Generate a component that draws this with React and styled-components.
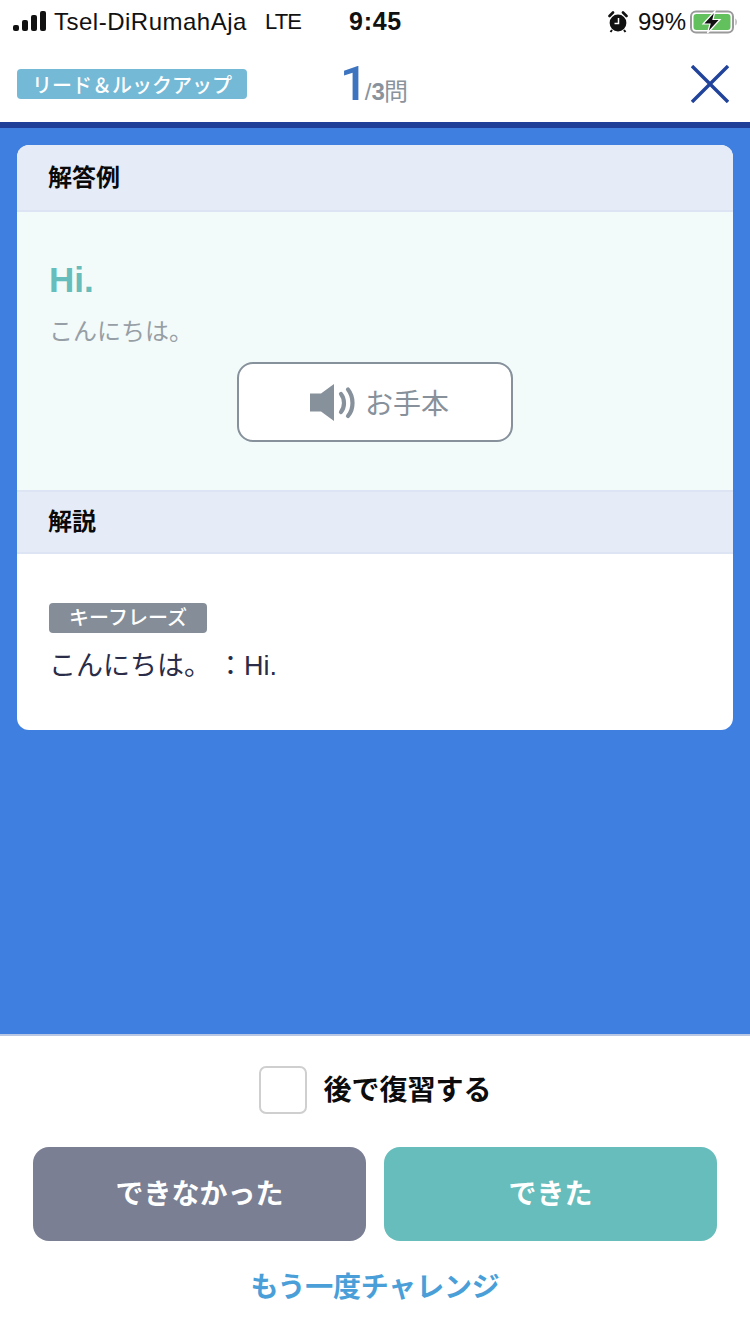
import React from 'react';
import styled, {createGlobalStyle} from 'styled-components';

const JP = `"Liberation Sans", "Noto Sans CJK JP", sans-serif`;

const GlobalStyle = createGlobalStyle`
    html, body {
        margin: 0;
        padding: 0;
        background: #fff;
    }
    * {
        box-sizing: border-box;
        text-spacing-trim: space-all;
    }
`;

const Screen = styled.div`
    width: 750px;
    height: 1334px;
    display: flex;
    flex-direction: column;
    font-family: ${JP};
    overflow: hidden;
    background: #fff;
`;

const StatusBar = styled.div`
    height: 42px;
    display: grid;
    grid-template-columns: 1fr auto 1fr;
    align-items: center;
    padding: 1px 12px 0 13px;
    color: #111;
    font-size: 24px;
    flex: none;
`;

const StatusLeft = styled.div`
    display: flex;
    align-items: center;
    gap: 8px;
`;

const Carrier = styled.span`
    margin-right: 10px;
    letter-spacing: 0.5px;
`;

const Network = styled.span`
    font-size: 22px;
    letter-spacing: -0.8px;
`;

const Clock = styled.div`
    font-weight: 700;
    font-size: 25px;
    letter-spacing: 0.7px;
`;

const StatusRight = styled.div`
    display: flex;
    align-items: center;
    justify-content: flex-end;
    gap: 8px;
`;

const Percent = styled.span`
    margin-right: -4px;
    margin-left: 2px;
`;

const Header = styled.header`
    height: 80px;
    flex: none;
    display: flex;
    align-items: center;
    padding: 4px 21px 0 17px;
`;

const ModeTag = styled.div`
    width: 230px;
    height: 30px;
    background: #74b9d6;
    border-radius: 4px;
    color: #fff;
    font-size: 20px;
    font-weight: 500;
    display: flex;
    align-items: center;
    justify-content: center;
`;

const Progress = styled.div`
    margin-left: 93px;
    display: flex;
    align-items: baseline;
    color: #8a939c;
    height: 48px;
    font-size: 24px;
`;

const ProgressCurrent = styled.span`
    color: #3d74c0;
    font-family: Roboto, sans-serif;
    font-size: 49px;
    font-weight: 500;
    line-height: 48px;
    letter-spacing: -3px;
`;

const ProgressTotal = styled.span`
    font-weight: 700;
    letter-spacing: -1px;
`;

const CloseButton = styled.button`
    margin-left: auto;
    width: 38px;
    height: 38px;
    padding: 0;
    border: none;
    background: none;
    display: block;
`;

const Main = styled.main`
    flex: 1;
    background: #3f7fe0;
    border-top: 6px solid #1f3f98;
    padding: 17px 17px 0;
`;

const Card = styled.section`
    background: #fff;
    border-radius: 12px;
    overflow: hidden;
`;

const SectionHead = styled.h2`
    margin: 0;
    height: ${p => p.$height}px;
    padding: 0 0 ${p => p.$lift}px 31px;
    display: flex;
    align-items: center;
    background: #e5ecf8;
    border-bottom: 2px solid #dde5f5;
    border-top: ${p => (p.$ruled ? '2px solid #dde5f5' : 'none')};
    color: #0a0a0a;
    font-size: 24px;
    font-weight: 700;
`;

const AnswerBody = styled.div`
    height: 278px;
    background: #f2fbfa;
    padding: 46px 32px 0;
`;

const AnswerEn = styled.div`
    color: #66bdbb;
    font-size: 35px;
    font-weight: 700;
    line-height: 44px;
`;

const AnswerJa = styled.div`
    color: #979fa6;
    font-size: 24px;
    line-height: 34px;
    margin-top: 13px;
`;

const SampleButton = styled.button`
    display: flex;
    align-items: center;
    justify-content: center;
    gap: 10px;
    width: 276px;
    height: 80px;
    margin: 13px auto 0;
    padding: 0 0 0 9px;
    background: #fff;
    border: 2px solid #87919b;
    border-radius: 16px;
    color: #87919b;
    font-family: ${JP};
    font-size: 28px;
`;

const ExplainBody = styled.div`
    height: 176px;
    padding: 49px 32px 0;
`;

const KeyTag = styled.div`
    width: 158px;
    height: 30px;
    padding-bottom: 3px;
    background: #858e98;
    border-radius: 4px;
    color: #fff;
    font-size: 20px;
    font-weight: 500;
    display: flex;
    align-items: center;
    justify-content: center;
`;

const KeyLine = styled.p`
    margin: 10px 0 0;
    color: #2a2c48;
    font-size: 27px;
    line-height: 46px;
`;

const KeyColon = styled.span`
    margin-left: 6px;
`;

const Footer = styled.footer`
    height: 300px;
    flex: none;
    background: #fff;
    border-top: 2px solid #b9c7e4;
    display: flex;
    flex-direction: column;
    padding: 30px 33px 0;
`;

const ReviewRow = styled.label`
    display: flex;
    align-items: center;
    justify-content: center;
    gap: 16px;
    padding-left: 1px;
    color: #0c0c0c;
    font-size: 28px;
    font-weight: 700;
`;

const ReviewBox = styled.span`
    width: 48px;
    height: 48px;
    background: #fff;
    border: 2px solid #cfcfcf;
    border-radius: 7px;
`;

const ReviewText = styled.span`
    margin-bottom: 4px;
`;

const Actions = styled.div`
    display: grid;
    grid-template-columns: 1fr 1fr;
    gap: 18px;
    margin-top: 33px;
`;

const Action = styled.button`
    height: 94px;
    padding: 0 0 4px;
    border: none;
    border-radius: 16px;
    background: ${p => (p.$done ? '#66bdbb' : '#7a7f93')};
    color: #fff;
    font-family: ${JP};
    font-size: 28px;
    font-weight: 700;
`;

const RetryLink = styled.a`
    margin-top: 27px;
    text-align: center;
    color: #4a9fd8;
    font-size: 28px;
    font-weight: 700;
    line-height: 40px;
    letter-spacing: -0.2px;
`;

const SignalIcon = () => (
    <svg width="33" height="21" viewBox="0 0 33 21">
        <rect x="0" y="14" width="6" height="6" rx="2" fill="#111"/>
        <rect x="9" y="9" width="6" height="11" rx="2" fill="#111"/>
        <rect x="18" y="4" width="6" height="16" rx="2" fill="#111"/>
        <rect x="27" y="0" width="6" height="20" rx="2" fill="#111"/>
    </svg>
);

const AlarmIcon = () => (
    <svg width="20" height="22" viewBox="0 0 20 22">
        <circle cx="10" cy="12" r="8.4" fill="#111"/>
        <path d="M1.5 5 L5 1.5 M15 1.5 L18.5 5" stroke="#111" strokeWidth="2.6" strokeLinecap="round"/>
        <path d="M4 19 L2.5 21 M16 19 L17.5 21" stroke="#111" strokeWidth="2"/>
        <path d="M10.5 7 V12.5 H6.5" stroke="#fff" strokeWidth="1.5" fill="none"/>
    </svg>
);

const BatteryIcon = () => (
    <svg width="48" height="24" viewBox="0 0 48 24">
        <rect x="1" y="1.5" width="42" height="21" rx="5" fill="none" stroke="#9a9a9a" strokeWidth="2"/>
        <rect x="3.5" y="4" width="37" height="16" rx="3" fill="#62c05d"/>
        <path d="M45.5 8.5 C47 9.5 47 14.5 45.5 15.5 Z" fill="#9a9a9a"/>
        <path d="M25 1 L13 14 H20 L17.5 23 L30 9.5 H23 Z" fill="#111" stroke="#fff" strokeWidth="1.2"/>
    </svg>
);

const CloseIcon = () => (
    <svg width="38" height="38" viewBox="0 0 38 38">
        <path d="M1 1 L37 37 M37 1 L1 37" stroke="#21439b" strokeWidth="3.4" fill="none"/>
    </svg>
);

const SpeakerIcon = () => (
    <svg width="45" height="37" viewBox="0 0 45 37">
        <path d="M0 9.5 H11 L24 0 V37 L11 27.5 H0 Z" fill="#87919b"/>
        <path d="M31 10 C35 15 35 23 31 28" fill="none" stroke="#87919b" strokeWidth="4.2" strokeLinecap="round"/>
        <path d="M38 5.5 C44 13 44 25 38 32" fill="none" stroke="#87919b" strokeWidth="4.2" strokeLinecap="round"/>
    </svg>
);

const App = () => (
    <Screen>
        <GlobalStyle/>
        <StatusBar>
            <StatusLeft>
                <SignalIcon/>
                <Carrier>Tsel-DiRumahAja</Carrier>
                <Network>LTE</Network>
            </StatusLeft>
            <Clock>9:45</Clock>
            <StatusRight>
                <AlarmIcon/>
                <Percent>99%</Percent>
                <BatteryIcon/>
            </StatusRight>
        </StatusBar>
        <Header>
            <ModeTag>リード＆ルックアップ</ModeTag>
            <Progress>
                <ProgressCurrent>1</ProgressCurrent>
                <span>/</span>
                <ProgressTotal>3</ProgressTotal>
                <span>問</span>
            </Progress>
            <CloseButton aria-label="閉じる"><CloseIcon/></CloseButton>
        </Header>
        <Main>
            <Card>
                <SectionHead $height={67} $lift={4}>解答例</SectionHead>
                <AnswerBody>
                    <AnswerEn>Hi.</AnswerEn>
                    <AnswerJa>こんにちは。</AnswerJa>
                    <SampleButton><SpeakerIcon/>お手本</SampleButton>
                </AnswerBody>
                <SectionHead $height={64} $lift={5} $ruled>解説</SectionHead>
                <ExplainBody>
                    <KeyTag>キーフレーズ</KeyTag>
                    <KeyLine>こんにちは。<KeyColon>：</KeyColon>Hi.</KeyLine>
                </ExplainBody>
            </Card>
        </Main>
        <Footer>
            <ReviewRow>
                <ReviewBox/>
                <ReviewText>後で復習する</ReviewText>
            </ReviewRow>
            <Actions>
                <Action>できなかった</Action>
                <Action $done>できた</Action>
            </Actions>
            <RetryLink>もう一度チャレンジ</RetryLink>
        </Footer>
    </Screen>
);

export default App;
